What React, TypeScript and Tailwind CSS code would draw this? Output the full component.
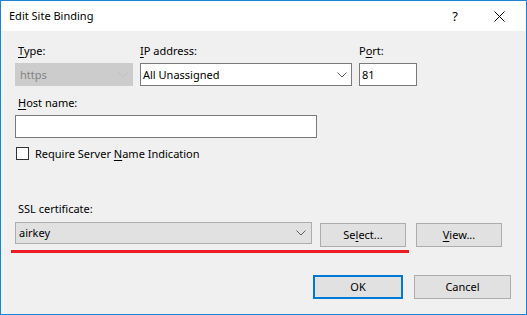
import React from "react";

const Chevron = ({ color = "#606060" }: { color?: string }) => (
  <svg width="10" height="6" viewBox="0 0 10 6" className="shrink-0">
    <path d="M0.5 0.5 L5 5 L9.5 0.5" fill="none" stroke={color} strokeWidth="1" />
  </svg>
);

const U = ({ children }: { children: React.ReactNode }) => (
  <span className="underline underline-offset-[2px] decoration-1">{children}</span>
);

export default function App() {
  return (
    <div
      className="w-[527px] h-[315px] border border-[#1883d7] bg-[#f0f0f0] flex flex-col text-[11px] text-black overflow-hidden"
      style={{ fontFamily: '"Segoe UI", "Noto Sans", "Open Sans", sans-serif' }}
    >
      {/* Title bar */}
      <div className="h-[30px] bg-white flex items-center shrink-0">
        <div className="pl-[8px] leading-[16px] text-[11px]">Edit Site Binding</div>
        <div className="flex-1" />
        <div className="w-[20px] flex justify-center text-[13px] leading-[16px] mr-[24px]">?</div>
        <div className="w-[20px] flex justify-center mr-[17px]">
          <svg width="11" height="11" viewBox="0 0 11 11">
            <path d="M0.5 0.5 L10.5 10.5 M10.5 0.5 L0.5 10.5" stroke="#000" strokeWidth="1" />
          </svg>
        </div>
      </div>

      {/* Body */}
      <div className="flex-1 flex flex-col pl-[14px] pr-[14px]">
        {/* Row 1 */}
        <div className="flex mt-[12px]">
          <div className="flex flex-col w-[118px]">
            <div className="leading-[16px] pl-[3px]">
              <U>T</U>ype:
            </div>
            <div className="mt-[4px] h-[23px] bg-[#cccccc] border border-[#cccccc] flex items-center pl-[4px] pr-[4px] text-[#838383]">
              <span className="flex-1 leading-[16px]">https</span>
              <Chevron color="#bfbfbf" />
            </div>
          </div>
          <div className="flex flex-col w-[212px] ml-[7px]">
            <div className="leading-[16px]">
              <U>I</U>P address:
            </div>
            <div className="mt-[4px] h-[23px] bg-white border border-[#7a7a7a] flex items-center pl-[2px] pr-[4px]">
              <span className="flex-1 leading-[16px]">All Unassigned</span>
              <Chevron />
            </div>
          </div>
          <div className="flex flex-col w-[58px] ml-[7px]">
            <div className="leading-[16px]">
              P<U>o</U>rt:
            </div>
            <div className="mt-[4px] h-[23px] bg-white border border-[#7a7a7a] flex items-center pl-[2px]">
              <span className="leading-[16px]">81</span>
            </div>
          </div>
        </div>

        {/* Host name */}
        <div className="mt-[9px] leading-[16px] pl-[3px]">
          <U>H</U>ost name:
        </div>
        <div className="mt-[4px] h-[23px] w-[302px] bg-white border border-[#7a7a7a]" />

        {/* Checkbox */}
        <div className="mt-[9px] flex items-center h-[13px] pl-[1px]">
          <div className="w-[13px] h-[13px] bg-white border border-[#333333]" />
          <div className="ml-[6px] leading-[16px]">
            Require Server <U>N</U>ame Indication
          </div>
        </div>

        {/* SSL certificate */}
        <div className="mt-[41px] leading-[16px] pl-[3px]">
          SSL certif<U>i</U>cate:
        </div>
        <div className="mt-[5px] flex items-start">
          <div className="w-[297px] h-[22px] bg-[#e1e1e1] border border-[#adadad] flex items-center pl-[3px] pr-[5px]">
            <span className="flex-1 leading-[16px]">airkey</span>
            <Chevron />
          </div>
          <button className="ml-[8px] mt-[1px] w-[86px] h-[24px] bg-[#e1e1e1] border border-[#adadad] flex items-center justify-center leading-[16px]">
            <span>
              Se<U>l</U>ect...
            </span>
          </button>
          <button className="ml-[10px] mt-[1px] w-[86px] h-[24px] bg-[#e1e1e1] border border-[#adadad] flex items-center justify-center leading-[16px]">
            <span>
              <U>V</U>iew...
            </span>
          </button>
        </div>
        <div className="mt-[3px] ml-[-4px] w-[398px] h-[3px] bg-[#ed1c24]" />

        {/* OK / Cancel */}
        <div className="mt-[22px] flex justify-end pr-[1px]">
          <button className="w-[90px] h-[24px] bg-[#e1e1e1] border-2 border-[#0078d7] flex items-center justify-center leading-[16px]">
            OK
          </button>
          <button className="ml-[11px] w-[97px] h-[24px] bg-[#e1e1e1] border border-[#adadad] flex items-center justify-center leading-[16px]">
            Cancel
          </button>
        </div>
      </div>
    </div>
  );
}
